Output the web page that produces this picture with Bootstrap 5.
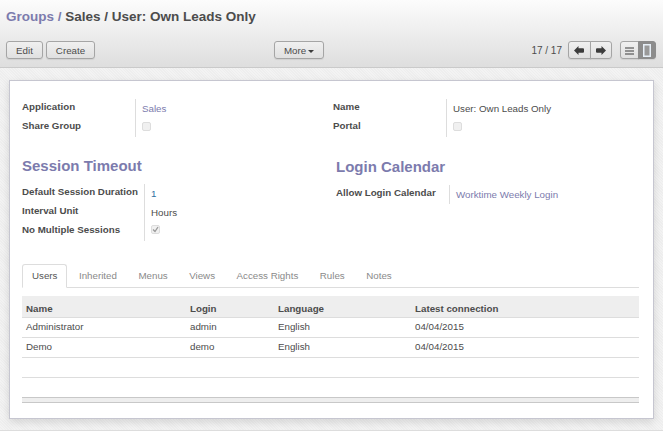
<!DOCTYPE html>
<html lang="en">
<head>
    <meta charset="UTF-8">
    <meta name="viewport" content="width=device-width, initial-scale=1.0">
    <link href="https://cdn.jsdelivr.net/npm/bootstrap@5.3.3/dist/css/bootstrap.min.css" rel="stylesheet">
    <script src="https://cdn.jsdelivr.net/npm/bootstrap@5.3.3/dist/js/bootstrap.bundle.min.js"></script>
    <title>Groups</title>
    <style>
        html, body{
            height: 100%;
        }
        body{
            font-family: "Liberation Sans", Arial, sans-serif;
            font-size: 9.75px;
            line-height: 1.2;
            color: #4c4c4c;
            background-color: #f0f0f0;
            background-image: repeating-linear-gradient(45deg, #f3f3f3 0 1px, #eeeeee 1px 2px);
            overflow: hidden;
        }
        .top-bar{
            height: 68px;
            padding: 9px 7px 0 6px;
            background: linear-gradient(#fcfcfc, #dedede);
            border-bottom: 1px solid #cacaca;
        }
        .crumbs{
            font-size: 13.5px;
            font-weight: 700;
            line-height: 15px;
            height: 32px;
            color: #4c4c4c;
        }
        .crumbs a, .crumbs .sep{
            color: #7c7bad;
            text-decoration: none;
        }
        .oe-btn{
            font-size: 9.75px;
            line-height: 15px;
            padding: 0;
            height: 18px;
            color: #4c4c4c;
            background: linear-gradient(#f0f0f0, #e0e0e0);
            border: 1px solid #a5a5a5;
            border-radius: 3px;
            box-shadow: 0 1px 1px rgba(0, 0, 0, .08);
        }
        .btn-edit{
            width: 37px;
        }
        .btn-create{
            width: 49px;
        }
        .btn-more{
            width: 50px;
        }
        .more-caret{
            display: inline-block;
            margin-left: 2px;
            vertical-align: 1px;
            border-top: 3px solid #3c3c3c;
            border-left: 3px solid transparent;
            border-right: 3px solid transparent;
        }
        .left-actions{
            width: 268px;
            gap: 3px;
        }
        .pager-text{
            font-size: 10px;
            margin-right: 6px;
            padding-top: 1px;
        }
        .pager-btn{
            width: 22.5px;
            line-height: 13px;
        }
        .switch-btn{
            width: 18.5px;
            line-height: 13px;
        }
        .switch-btn.on{
            background: #8c8c8c;
            border-color: #8c8c8c;
        }
        .sheet-wrap{
            height: 362px;
            padding: 12px 9px 0;
        }
        .sheet{
            height: 339px;
            padding: 18px 14px 0 12px;
            background: #fff;
            border: 1px solid #c6c6d0;
            box-shadow: 0 3px 8px rgba(0, 0, 0, .12);
        }
        .form-left{
            flex: 0 0 311px;
        }
        .form-left-wide{
            flex: 0 0 314px;
        }
        .form-right-low{
            padding-top: 1px;
        }
        .field-grid{
            display: grid;
        }
        .field-label{
            height: 19px;
            font-weight: 700;
            line-height: 15px;
            color: #4c4c4c;
            border-right: 1px solid #ddd;
        }
        .field-value{
            height: 19px;
            padding-left: 6px;
            padding-top: 2px;
            line-height: 15px;
        }
        .grid-a{
            grid-template-columns: 114px 1fr;
        }
        .grid-b{
            grid-template-columns: 123px 1fr;
        }
        .link-value{
            color: #7c7bad;
            text-decoration: none;
        }
        .blue-value{
            color: #2f6f9f;
        }
        .fake-check{
            display: block;
            width: 9px;
            height: 9px;
            margin-top: 2px;
            background: #f0f0f0;
            border: 1px solid #ddd;
            border-radius: 2px;
        }
        .fake-check.is-on{
            margin-top: 1px;
        }
        .fake-check svg{
            display: block;
        }
        .section-title{
            font-size: 15px;
            font-weight: 700;
            line-height: 18px;
            color: #7c7bad;
            margin: 0 0 9px;
        }
        .section-row{
            margin-top: 20px;
        }
        .tabs-row{
            margin-top: 23px;
            border-bottom: 1px solid #ddd;
        }
        .tabs-row .nav-item + .nav-item{
            margin-left: 1.5px;
        }
        .tabs-row .nav-link{
            font-size: 9.75px;
            line-height: 13px;
            padding: 4px 9px 4px;
            height: 24px;
            color: #8a8a8a;
            margin-bottom: -1px;
            border: 1px solid transparent;
            border-radius: 3px 3px 0 0;
        }
        .tabs-row .nav-link.active{
            color: #555;
            background: #fff;
            border-color: #ddd #ddd #fff;
        }
        .users-table{
            margin: 8px 0 0;
            width: 617px;
            font-size: 9.75px;
            table-layout: fixed;
            color: #4c4c4c;
        }
        .users-table th, .users-table td{
            height: 20px;
            padding: 0 4px 1px;
            line-height: 13px;
            vertical-align: middle;
            border: 0;
            border-bottom: 1px solid #ddd;
            box-shadow: none;
            color: #4c4c4c;
        }
        .users-table th{
            height: 21px;
            padding: 4px 4px 0;
            font-weight: 700;
            background: #eeeeee;
        }
        .users-table tbody tr:last-child td{
            border-bottom-color: #c8c8c8;
        }
        .foot-rule{
            height: 5px;
            width: 617px;
            background: #eeeeee;
            border-bottom: 1px solid #c8c8c8;
        }
        .page-end{
            height: 2px;
            background: #fff;
            border-top: 1px solid #ddd;
        }
    </style>
</head>
<body>
    <div class="top-bar">
        <div class="crumbs"><a href="#">Groups</a> <span class="sep">/</span> Sales / User: Own Leads Only</div>
        <div class="d-flex align-items-center">
            <div class="left-actions d-flex">
                <button type="button" class="btn oe-btn btn-edit">Edit</button>
                <button type="button" class="btn oe-btn btn-create">Create</button>
            </div>
            <button type="button" class="btn oe-btn btn-more">More<span class="more-caret"></span></button>
            <div class="ms-auto d-flex align-items-center">
                <span class="pager-text">17 / 17</span>
                <div class="btn-group me-2">
                    <button type="button" class="btn oe-btn pager-btn" aria-label="Previous">
                        <svg width="10" height="9" viewBox="0 0 10 9"><path d="M0 4.5 4.5 0v2.2H9q1 0 1 1v2.6q0 1-1 1H4.5V9z" fill="#3c3c3c"/></svg>
                    </button>
                    <button type="button" class="btn oe-btn pager-btn" aria-label="Next">
                        <svg width="10" height="9" viewBox="0 0 10 9"><path d="M10 4.5 5.5 0v2.2H1q-1 0-1 1v2.6q0 1 1 1h4.5V9z" fill="#3c3c3c"/></svg>
                    </button>
                </div>
                <div class="btn-group">
                    <button type="button" class="btn oe-btn switch-btn" aria-label="List">
                        <svg width="9" height="8" viewBox="0 0 9 8"><path d="M0 1h9M0 4h9M0 7h9" stroke="#3c3c3c" stroke-width="1.2"/></svg>
                    </button>
                    <button type="button" class="btn oe-btn switch-btn on" aria-label="Form">
                        <svg width="8" height="13" viewBox="0 0 8 13"><rect x=".75" y=".75" width="6.5" height="11.5" fill="#999" stroke="#e6eef6" stroke-width="1.5"/></svg>
                    </button>
                </div>
            </div>
        </div>
    </div>
    <div class="sheet-wrap">
        <div class="sheet">
            <div class="d-flex">
                <div class="form-left">
                    <div class="field-grid grid-a">
                        <div class="field-label">Application</div>
                        <div class="field-value"><a href="#" class="link-value">Sales</a></div>
                        <div class="field-label">Share Group</div>
                        <div class="field-value"><span class="fake-check"></span></div>
                    </div>
                </div>
                <div class="flex-grow-1">
                    <div class="field-grid grid-a">
                        <div class="field-label">Name</div>
                        <div class="field-value">User: Own Leads Only</div>
                        <div class="field-label">Portal</div>
                        <div class="field-value"><span class="fake-check"></span></div>
                    </div>
                </div>
            </div>
            <div class="d-flex section-row">
                <div class="form-left-wide">
                    <h2 class="section-title">Session Timeout</h2>
                    <div class="field-grid grid-b">
                        <div class="field-label">Default Session Duration</div>
                        <div class="field-value blue-value">1</div>
                        <div class="field-label">Interval Unit</div>
                        <div class="field-value">Hours</div>
                        <div class="field-label">No Multiple Sessions</div>
                        <div class="field-value">
                            <span class="fake-check is-on"><svg width="7" height="7" viewBox="0 0 7 7"><path d="M1 3.5 3 5.5 6 1" fill="none" stroke="#999" stroke-width="1.3"/></svg></span>
                        </div>
                    </div>
                </div>
                <div class="flex-grow-1 form-right-low">
                    <h2 class="section-title">Login Calendar</h2>
                    <div class="field-grid grid-a">
                        <div class="field-label">Allow Login Calendar</div>
                        <div class="field-value"><a href="#" class="link-value">Worktime Weekly Login</a></div>
                    </div>
                </div>
            </div>
            <ul class="nav nav-tabs tabs-row">
                <li class="nav-item"><a class="nav-link active" href="#">Users</a></li>
                <li class="nav-item"><a class="nav-link" href="#">Inherited</a></li>
                <li class="nav-item"><a class="nav-link" href="#">Menus</a></li>
                <li class="nav-item"><a class="nav-link" href="#">Views</a></li>
                <li class="nav-item"><a class="nav-link" href="#">Access Rights</a></li>
                <li class="nav-item"><a class="nav-link" href="#">Rules</a></li>
                <li class="nav-item"><a class="nav-link" href="#">Notes</a></li>
            </ul>
            <table class="table users-table">
                <colgroup>
                    <col style="width: 164px">
                    <col style="width: 88px">
                    <col style="width: 137px">
                    <col>
                </colgroup>
                <thead>
                    <tr><th>Name</th><th>Login</th><th>Language</th><th>Latest connection</th></tr>
                </thead>
                <tbody>
                    <tr><td>Administrator</td><td>admin</td><td>English</td><td>04/04/2015</td></tr>
                    <tr><td>Demo</td><td>demo</td><td>English</td><td>04/04/2015</td></tr>
                    <tr><td></td><td></td><td></td><td></td></tr>
                    <tr><td></td><td></td><td></td><td></td></tr>
                </tbody>
            </table>
            <div class="foot-rule"></div>
        </div>
    </div>
    <div class="page-end"></div>
</body>
</html>
